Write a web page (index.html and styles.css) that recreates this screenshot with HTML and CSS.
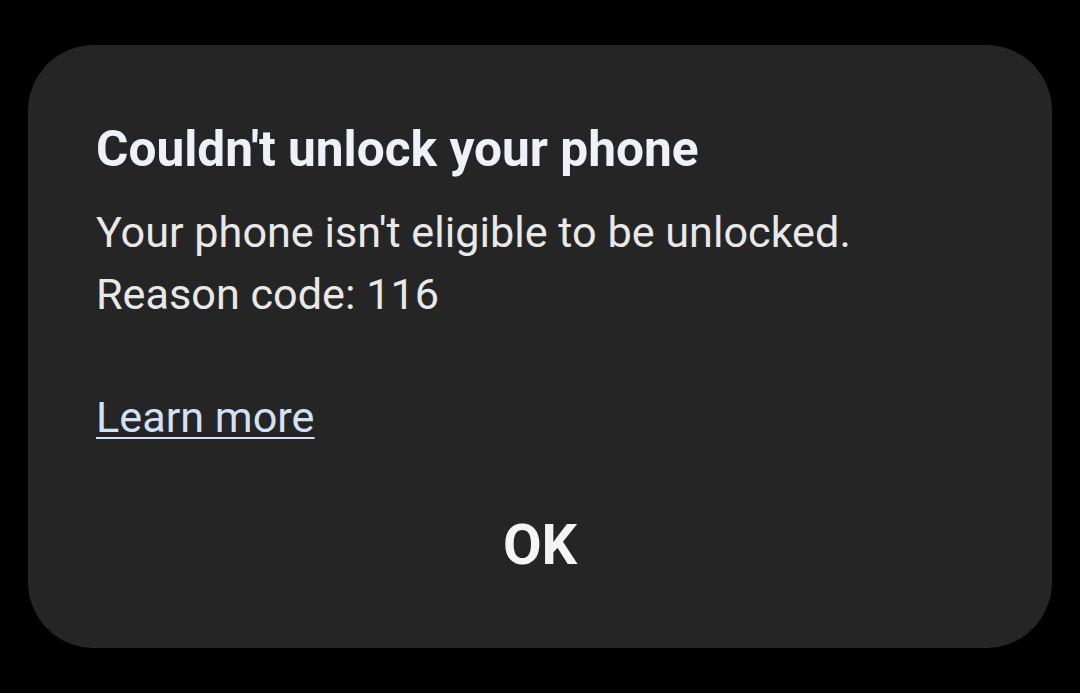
FILE: index.html
```html
<!DOCTYPE html>
<html>
<head>
<meta charset="utf-8">
<link rel="stylesheet" href="styles.css">
</head>
<body>
<div class="dialog">
  <h1 class="title">Couldn't unlock your phone</h1>
  <p class="body">Your phone isn't eligible to be unlocked.<br>Reason code: 116</p>
  <a class="link" href="#">Learn more</a>
  <div class="actions"><button class="ok">OK</button></div>
</div>
</body>
</html>
```
FILE: styles.css
```css
html, body { margin: 0; padding: 0; background: #000; }
body { width: 1080px; height: 693px; font-family: Roboto, "Noto Sans", sans-serif; padding-top: 45px; box-sizing: border-box; }
.dialog {
  margin: 0 28px;
  height: 603px;
  background: #252525;
  border-radius: 66px;
  padding: 0 68px;
  box-sizing: border-box;
  display: flex;
  flex-direction: column;
}
.title { margin: 76px 0 0; font-size: 49.6px; font-weight: 700; line-height: 56px; color: #eef0fa; white-space: nowrap; }
.body { margin: 25px 0 0; font-size: 43.2px; line-height: 62px; color: #e8e8e8; }
.link { margin-top: 61px; font-size: 43.2px; line-height: 62px; color: #d4e0f7; text-decoration: underline; text-decoration-thickness: 2px; text-underline-offset: 5px; align-self: flex-start; }
.actions { display: flex; justify-content: center; margin-top: 64px; }
.ok { background: none; border: 0; padding: 0; font-family: inherit; font-size: 56px; font-weight: 700; color: #f5f5f5; line-height: 64px; }
```
